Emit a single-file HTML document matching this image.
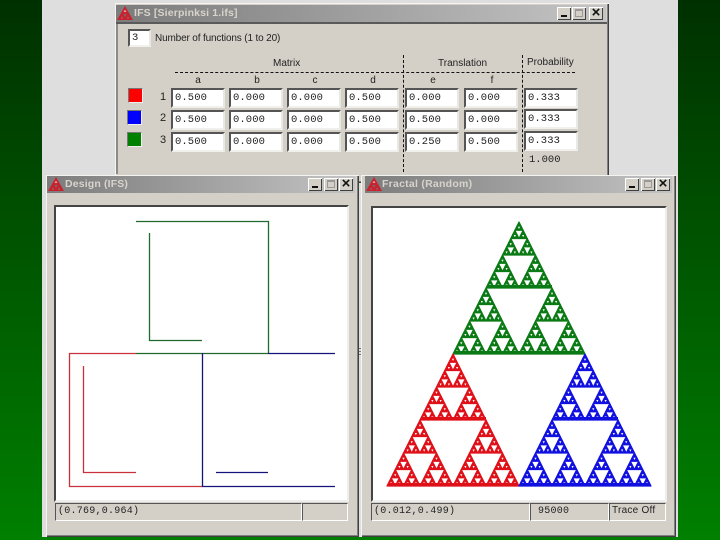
<!DOCTYPE html>
<html>
<head>
<meta charset="utf-8">
<style>
html,body{margin:0;padding:0;width:720px;height:540px;overflow:hidden;background:linear-gradient(#003000,#008000);}
div{position:absolute;box-sizing:border-box;}
body{font-family:"Liberation Sans",sans-serif;font-size:10px;color:#222;}
#page{left:42px;top:0;width:636px;height:537px;background:#dedede;}
.win{background:#d4d0c8;box-shadow:inset 1px 1px 0 #f4f4f0,inset -1px -1px 0 #404040,inset -2px -2px 0 #808080;}
.tb{background:linear-gradient(90deg,#7c7c7c,#c4c4c4);color:#d8d4cc;font-weight:bold;font-size:10.5px;letter-spacing:.15px;line-height:17px;white-space:nowrap;}
.tb span{position:absolute;top:0;}
.btn{width:14px;height:13px;background:#d4d0c8;box-shadow:inset 1px 1px 0 #fff,inset -1px -1px 0 #404040;}
.min:after{content:"";position:absolute;left:4px;top:8px;width:6px;height:2px;background:#111;}
.max:after{content:"";position:absolute;left:3px;top:2px;width:8px;height:8px;border:1px solid #999;border-top-width:2px;box-sizing:border-box;}
.cls:before{content:"\00D7";position:absolute;left:0;top:-2px;width:14px;text-align:center;font:bold 15px/15px "Liberation Sans",sans-serif;color:#111;}
.in{background:#fff;border:2px solid;border-color:#555 #e8e8e4 #f0f0ec #555;font-family:"Liberation Mono",monospace;font-size:10.5px;letter-spacing:.1px;line-height:16px;padding-left:2px;width:54px;height:20px;white-space:nowrap;}
.lb{white-space:nowrap;line-height:12px;}
.c{text-align:center;width:20px;}
.sw{width:15px;height:15px;border:1px solid;border-color:#777 #eee #eee #777;}
.st{border:1px solid;border-color:#555 #fff #fff #555;font-family:"Liberation Mono",monospace;font-size:10px;letter-spacing:.25px;line-height:16px;padding-left:2px;white-space:nowrap;height:18px;}
.dh{height:0;border-top:1px dashed #111;}
.dv{width:0;border-left:1px dashed #111;}
.cv{background:#fff;border:2px solid;border-color:#444 #eee #eee #444;}
</style>
</head>
<body>
<svg width="0" height="0" style="position:absolute">
<defs>
<polygon id="t0" points="2.06,0 4.125,4.125 0,4.125" stroke-width="1.2" stroke-linejoin="round"/>
<g id="t1"><use href="#t0" x="2.0625"/><use href="#t0" y="4.125"/><use href="#t0" x="4.125" y="4.125"/></g>
<g id="t2"><use href="#t1" x="4.125"/><use href="#t1" y="8.25"/><use href="#t1" x="8.25" y="8.25"/></g>
<g id="t3"><use href="#t2" x="8.25"/><use href="#t2" y="16.5"/><use href="#t2" x="16.5" y="16.5"/></g>
<g id="t4"><use href="#t3" x="16.5"/><use href="#t3" y="33"/><use href="#t3" x="33" y="33"/></g>
<g id="t5"><use href="#t4" x="33"/><use href="#t4" y="66"/><use href="#t4" x="66" y="66"/></g>
<g id="ic"><polygon points="8,0 16,14 0,14" fill="#c8222e"/><polygon points="6.5,6 9.5,6 8,3.5" fill="#e8a0a0"/><polygon points="4,12.5 6,12.5 5,10.5" fill="#8a7a7a"/><polygon points="10,12.5 12,12.5 11,10.5" fill="#8a7a7a"/><polygon points="6.5,8 9.5,8 8,11" fill="#7a6a6a"/></g>
</defs>
</svg>

<div id="page"></div>

<!-- IFS window -->
<div class="win" style="left:115px;top:3px;width:494px;height:180px;"></div>
<div class="tb" style="left:116px;top:5px;width:490px;height:17px;">
  <svg style="position:absolute;left:1px;top:1px" width="17" height="15"><use href="#ic"/></svg>
  <span style="left:18px">IFS [Sierpinksi 1.ifs]</span>
</div>
<div class="btn min" style="left:557px;top:7px"></div>
<div class="btn max" style="left:572px;top:7px"></div>
<div class="btn cls" style="left:589px;top:7px"></div>
<div style="left:116px;top:22px;width:491px;height:2px;background:#5a5a5a"></div>
<div style="left:116px;top:24px;width:2px;height:150px;background:#8a8a86"></div>

<div class="in" style="left:128px;top:29px;width:23px;height:18px;line-height:14px;">3</div>
<div class="lb" style="left:155px;top:33px;letter-spacing:-.15px">Number of functions (1 to 20)</div>

<div class="lb" style="left:273px;top:58px;">Matrix</div>
<div class="lb" style="left:438px;top:58px;">Translation</div>
<div class="lb" style="left:527px;top:57px;">Probability</div>
<div class="dh" style="left:175px;top:72px;width:400px"></div>
<div class="dv" style="left:403px;top:55px;height:117px"></div>
<div class="dv" style="left:522px;top:55px;height:117px"></div>

<div class="lb c" style="left:188px;top:75px">a</div>
<div class="lb c" style="left:247px;top:75px">b</div>
<div class="lb c" style="left:305px;top:75px">c</div>
<div class="lb c" style="left:363px;top:75px">d</div>
<div class="lb c" style="left:423px;top:75px">e</div>
<div class="lb c" style="left:482px;top:75px">f</div>

<div class="sw" style="left:128px;top:88px;background:#f00"></div>
<div class="sw" style="left:127px;top:110px;background:#00f"></div>
<div class="sw" style="left:127px;top:132px;background:#008000"></div>
<div class="lb" style="left:160px;top:91px;font-size:11px">1</div>
<div class="lb" style="left:160px;top:112px;font-size:11px">2</div>
<div class="lb" style="left:160px;top:134px;font-size:11px">3</div>

<div class="in" style="left:171px;top:88px">0.500</div>
<div class="in" style="left:229px;top:88px">0.000</div>
<div class="in" style="left:287px;top:88px">0.000</div>
<div class="in" style="left:345px;top:88px">0.500</div>
<div class="in" style="left:405px;top:88px">0.000</div>
<div class="in" style="left:464px;top:88px">0.000</div>
<div class="in" style="left:524px;top:88px">0.333</div>

<div class="in" style="left:171px;top:110px">0.500</div>
<div class="in" style="left:229px;top:110px">0.000</div>
<div class="in" style="left:287px;top:110px">0.000</div>
<div class="in" style="left:345px;top:110px">0.500</div>
<div class="in" style="left:405px;top:110px">0.500</div>
<div class="in" style="left:464px;top:110px">0.000</div>
<div class="in" style="left:524px;top:109px">0.333</div>

<div class="in" style="left:171px;top:132px">0.500</div>
<div class="in" style="left:229px;top:132px">0.000</div>
<div class="in" style="left:287px;top:132px">0.000</div>
<div class="in" style="left:345px;top:132px">0.500</div>
<div class="in" style="left:405px;top:132px">0.250</div>
<div class="in" style="left:464px;top:132px">0.500</div>
<div class="in" style="left:524px;top:131px">0.333</div>

<div class="lb" style="left:529px;top:154px;font-family:'Liberation Mono',monospace;font-size:10.5px;">1.000</div>

<!-- Design window -->
<div class="win" style="left:46px;top:175px;width:313px;height:362px;"></div>
<div class="tb" style="left:47px;top:176px;width:308px;height:17px;">
  <svg style="position:absolute;left:1px;top:1px" width="17" height="15"><use href="#ic"/></svg>
  <span style="left:18px">Design (IFS)</span>
</div>
<div class="btn min" style="left:308px;top:178px"></div>
<div class="btn max" style="left:324px;top:178px"></div>
<div class="btn cls" style="left:339px;top:178px"></div>
<div class="cv" style="left:54px;top:205px;width:295px;height:297px;"></div>
<svg style="position:absolute;left:0;top:0" width="720" height="540" fill="none" stroke-width="1.3">
  <path d="M136 221.5H268.5V353M149.5 233V340.5H202M136 353.5H268" stroke="#1f6a2c"/>
  <path d="M136 353.5H69.5V486.5H202M83.5 366V472.5H136" stroke="#c8303c"/>
  <path d="M268 353.5H335M202.5 353V486.5H335M216 472.5H268" stroke="#14147a"/>
</svg>
<div class="st" style="left:55px;top:503px;width:247px;">(0.769,0.964)</div>
<div class="st" style="left:302px;top:503px;width:46px;"></div>

<!-- Fractal window -->
<div class="win" style="left:361px;top:175px;width:315px;height:362px;"></div>
<div class="tb" style="left:365px;top:176px;width:307px;height:17px;">
  <svg style="position:absolute;left:1px;top:1px" width="17" height="15"><use href="#ic"/></svg>
  <span style="left:17px;letter-spacing:.25px">Fractal (Random)</span>
</div>
<div class="btn min" style="left:625px;top:178px"></div>
<div class="btn max" style="left:641px;top:178px"></div>
<div class="btn cls" style="left:656px;top:178px"></div>
<div class="cv" style="left:371px;top:206px;width:296px;height:296px;"></div>
<svg style="position:absolute;left:0;top:0" width="720" height="540">
  <use href="#t5" x="453" y="222" fill="#0a7a14" stroke="#0a7a14"/>
  <use href="#t5" x="387" y="354" fill="#e01018" stroke="#e01018"/>
  <use href="#t5" x="519" y="354" fill="#1010e0" stroke="#1010e0"/>
  <rect x="454" y="351" width="130" height="3" fill="#0a7a14"/>
  <rect x="388" y="483" width="130" height="3" fill="#e01018"/>
  <rect x="520" y="483" width="130" height="3" fill="#1010e0"/>
  <rect x="421" y="417" width="65" height="2.5" fill="#e01018"/>
  <rect x="553" y="417" width="65" height="2.5" fill="#1010e0"/>
  <rect x="487" y="285" width="65" height="2.5" fill="#0a7a14"/>
</svg>
<div class="st" style="left:371px;top:503px;width:159px;">(0.012,0.499)</div>
<div class="st" style="left:530px;top:503px;width:79px;padding-left:7px;">95000</div>
<div class="st" style="left:609px;top:503px;width:57px;font-family:'Liberation Sans',sans-serif;line-height:14px;">Trace Off</div>

<div style="left:359px;top:348px;width:2px;height:1px;background:#777"></div>
<div style="left:359px;top:351px;width:2px;height:1px;background:#777"></div>
<div style="left:359px;top:354px;width:2px;height:1px;background:#777"></div>
</body>
</html>
